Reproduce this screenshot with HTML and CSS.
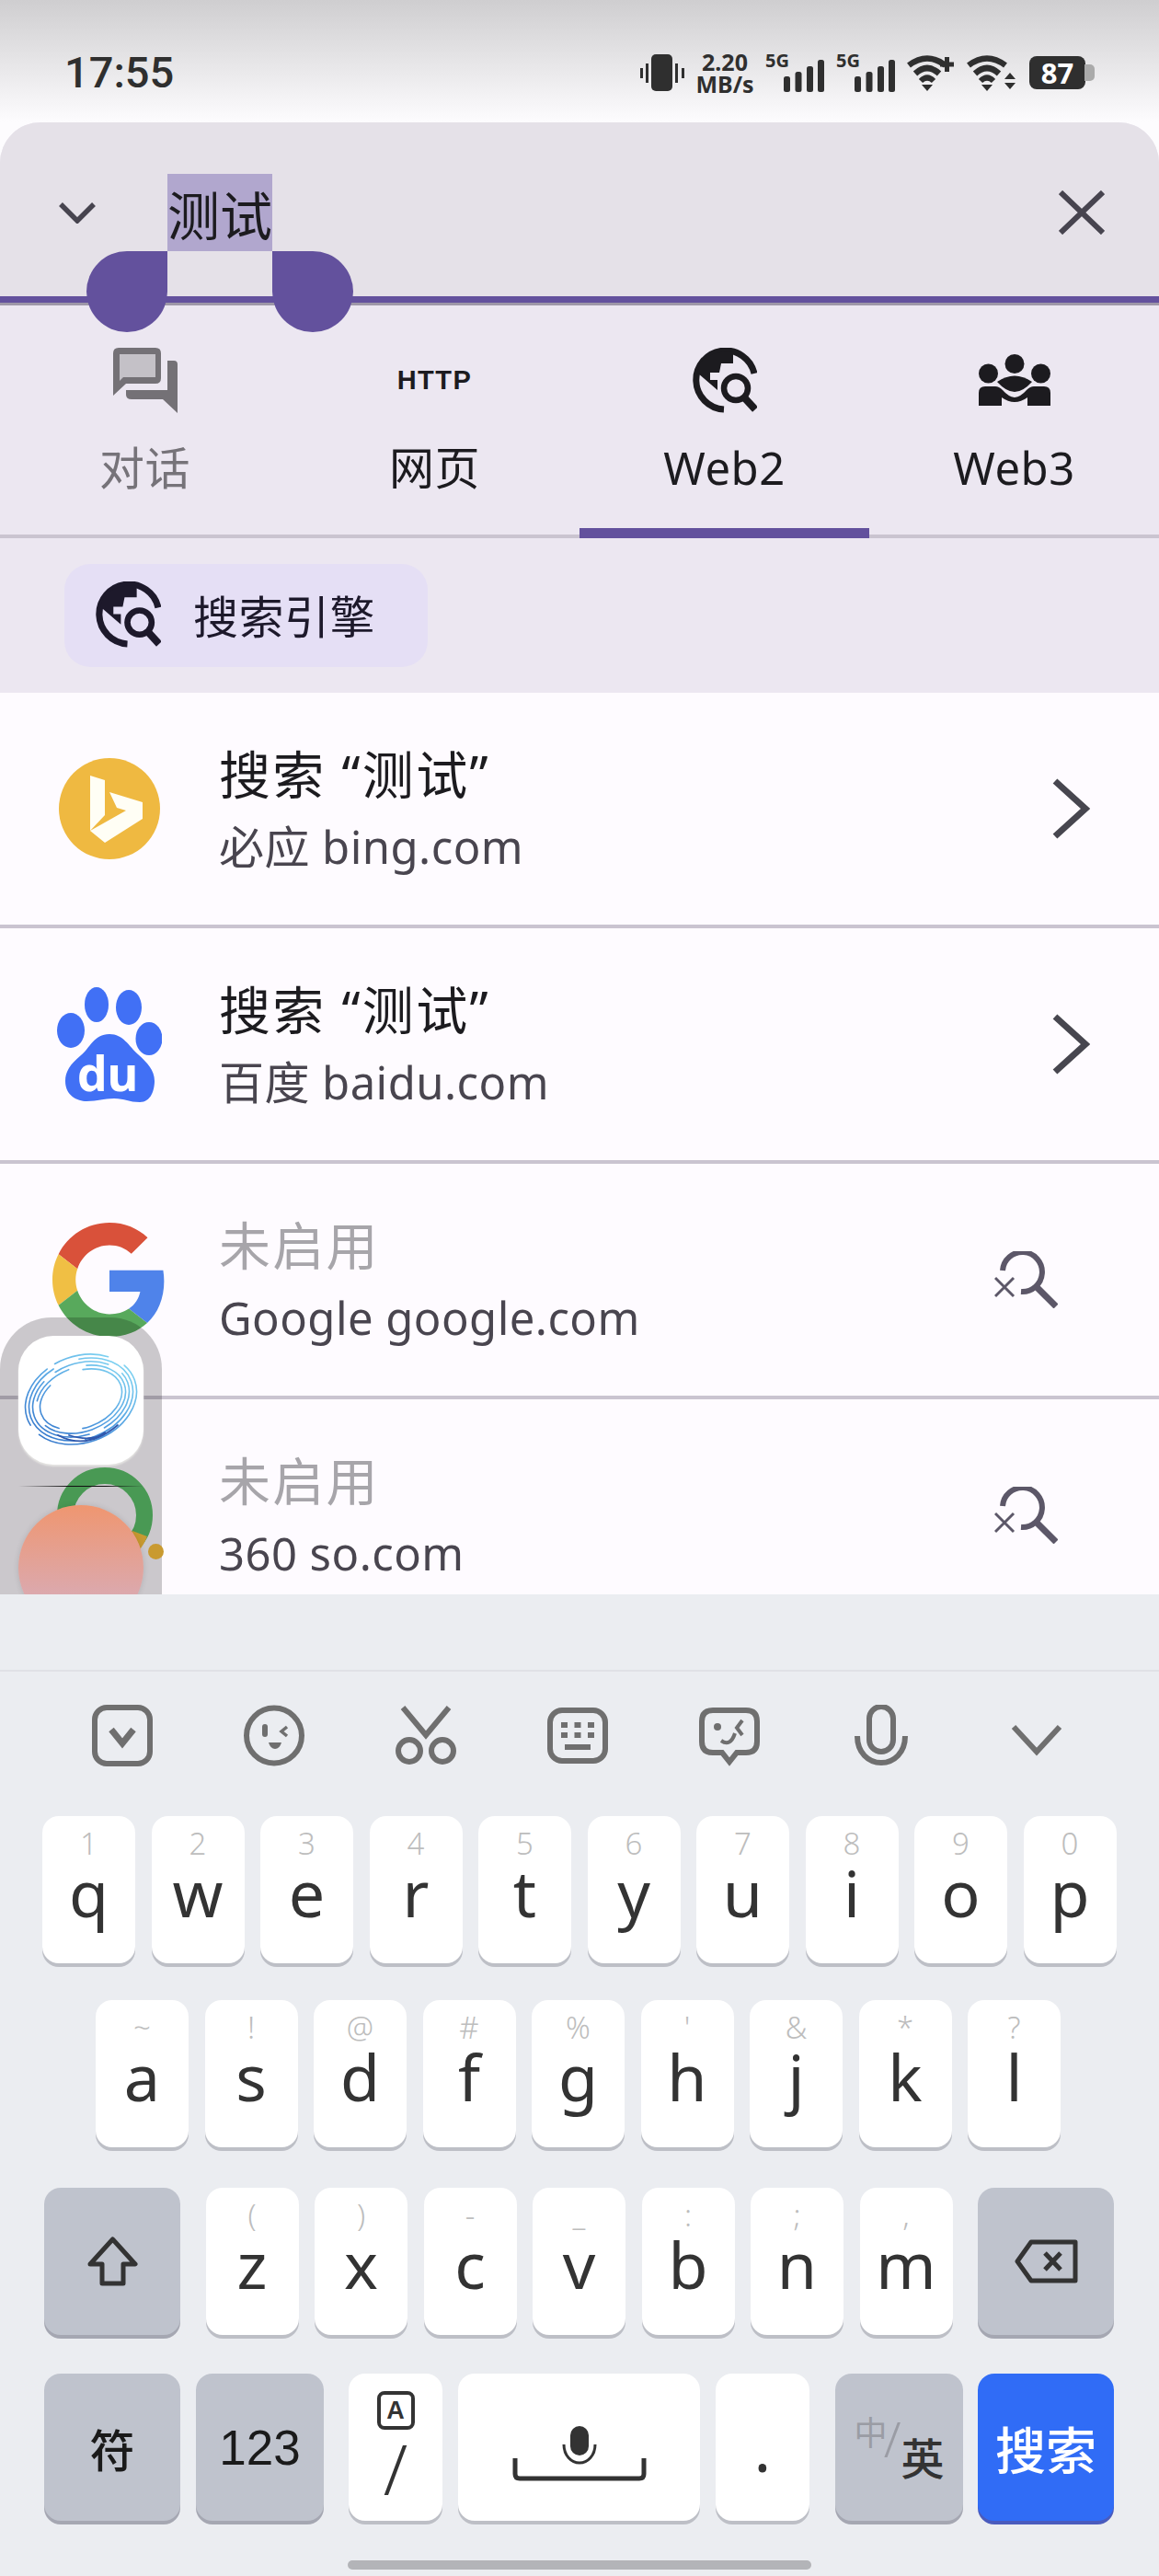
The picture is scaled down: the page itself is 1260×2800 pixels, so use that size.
FILE: index.html
```html
<!DOCTYPE html>
<html lang="zh">
<head>
    <meta charset="UTF-8">
    <title>搜索</title>
    <link rel="stylesheet" href="styles.css">
</head>
<body>
<svg class="defs" width="0" height="0">
    <symbol id="globe" viewBox="0 0 71 71">
        <path d="M68 28A32 32 0 1 0 35 67" fill="none" stroke="currentColor" stroke-width="7"/>
        <path d="M9 17C16 8 28 3 45 5V17H32L30 27H20V35H28V46L6 27Z" fill="currentColor"/>
        <circle cx="48" cy="44" r="13" fill="none" stroke="currentColor" stroke-width="6.5"/>
        <path d="M57 54L69 67" stroke="currentColor" stroke-width="8"/>
    </symbol>
    <symbol id="searchoff" viewBox="0 0 69 62">
        <path d="M9 21A21.5 21.5 0 1 1 29 44" fill="none" stroke="#5c5768" stroke-width="6"/>
        <path d="M46 39L67 60" stroke="#5c5768" stroke-width="7"/>
        <path d="M1 29L21 49M21 29L1 49" stroke="#5c5768" stroke-width="3"/>
    </symbol>
    <symbol id="bars" viewBox="0 0 64 44">
        <rect x="20" y="27" width="7" height="17" rx="2.5"/>
        <rect x="32.500" y="22" width="7" height="22" rx="2.5"/>
        <rect x="45" y="16" width="7" height="28" rx="2.5"/>
        <rect x="57" y="9" width="7" height="35" rx="2.5"/>
    </symbol>
    <symbol id="wifi" viewBox="0 0 44 40">
        <path d="M2 12Q22 -3 42 12" fill="none" stroke="#2f2f2f" stroke-width="6.500"/>
        <path d="M9 21Q22 9 35 21" fill="none" stroke="#2f2f2f" stroke-width="6.500"/>
        <path d="M15 29Q22 22 29 29" fill="none" stroke="#2f2f2f" stroke-width="6"/>
        <path d="M16 33H28L22 40Z" fill="#2f2f2f"/>
    </symbol>
</svg>

<div class="phone">
    <div class="status">
        <span class="time">17:55</span>
        <div class="status-icons">
            <svg width="48" height="40" viewBox="0 0 48 40" fill="#2f2f2f">
                <rect x="12" y="0" width="23" height="40" rx="5"/>
                <rect x="0" y="15" width="3" height="11"/>
                <rect x="6" y="10" width="3" height="21"/>
                <rect x="38" y="10" width="3" height="21"/>
                <rect x="45" y="15" width="3" height="11"/>
            </svg>
            <div class="speed"><span>2.20</span><span>MB/s</span></div>
            <svg class="bars" width="64" height="56" viewBox="0 0 64 56" fill="#2f2f2f">
                <use href="#bars" y="5" width="64" height="44"/>
                <text x="0" y="22" class="net">5G</text>
            </svg>
            <svg class="bars" width="64" height="56" viewBox="0 0 64 56" fill="#2f2f2f">
                <use href="#bars" y="5" width="64" height="44"/>
                <text x="0" y="22" class="net">5G</text>
            </svg>
            <svg width="52" height="40" viewBox="0 0 52 40">
                <use href="#wifi" width="44" height="40"/>
                <path d="M36 11H51M43.500 3V19" stroke="#2f2f2f" stroke-width="5"/>
            </svg>
            <svg width="55" height="40" viewBox="0 0 55 40">
                <use href="#wifi" width="44" height="40"/>
                <path d="M47 20L53 27H41ZM41 31H53L47 38Z" fill="#2f2f2f"/>
            </svg>
            <div class="battery">
                <div class="battery-body">87</div>
                <div class="battery-nub"></div>
            </div>
        </div>
    </div>

    <div class="sheet">
        <div class="search-bar">
            <svg class="search-back" width="40" height="23" viewBox="0 0 40 23">
                <path d="M2 2L20 20L38 2" fill="none" stroke="#47444f" stroke-width="5.500"/>
            </svg>
            <span class="search-text">测试</span>
            <svg class="search-close" width="50" height="48" viewBox="0 0 50 48">
                <path d="M2 2L48 46M48 2L2 46" stroke="#47444f" stroke-width="6"/>
            </svg>
            <div class="handle handle-left"></div>
            <div class="handle handle-right"></div>
        </div>

        <div class="tabs">
            <div class="tab tab-muted">
                <div class="tab-icon">
                    <svg width="70" height="71" viewBox="0 0 70 71">
                        <path d="M6 0H46Q52 0 52 6V33Q52 39 46 39H14L0 52V6Q0 0 6 0Z" fill="#747176"/>
                        <path d="M7 7H46V32H11L7 36Z" fill="#c4c1c7"/>
                        <path d="M59 14H66Q70 14 70 18V71L54 56H20Q14 56 14 51V46H59Z" fill="#747176"/>
                    </svg>
                </div>
                <span>对话</span>
            </div>
            <div class="tab">
                <div class="tab-icon"><span class="http">HTTP</span></div>
                <span>网页</span>
            </div>
            <div class="tab tab-on">
                <div class="tab-icon"><svg class="ink" width="71" height="71"><use href="#globe"/></svg></div>
                <span>Web2</span>
            </div>
            <div class="tab">
                <div class="tab-icon">
                    <svg width="78" height="56" viewBox="0 0 78 56" fill="#1c1b1f">
                        <circle cx="39" cy="10.500" r="10.500"/>
                        <circle cx="10.500" cy="21" r="10.500"/>
                        <circle cx="67.500" cy="21" r="10.500"/>
                        <path d="M20 30Q39 17 58 30Q48 41 39 41Q30 41 20 30Z"/>
                        <path d="M0 56V42Q0 35 7 35H18Q22 35 26 39Q32 46 39 47Q46 46 52 39Q56 35 60 35H71Q78 35 78 42V56H53V47Q46 52 39 52Q32 52 25 47V56Z"/>
                    </svg>
                </div>
                <span>Web3</span>
            </div>
        </div>

        <div class="filters">
            <div class="chip">
                <svg class="chip-icon" width="72" height="72"><use href="#globe"/></svg>
                <span>搜索引擎</span>
            </div>
        </div>

        <div class="list">
            <div class="row">
                <div class="logo">
                    <svg width="110" height="110" viewBox="0 0 110 110">
                        <circle cx="55" cy="55" r="55" fill="#efb941"/>
                        <path d="M34 19L50 24V62L34 79Z" fill="#fffef5"/>
                        <path d="M34 79L73 57L63 54L55 37L91 48V66L50 92Z" fill="#fffef5"/>
                    </svg>
                </div>
                <div class="row-text">
                    <div class="row-title">搜索 “测试”</div>
                    <div class="row-sub">必应 bing.com</div>
                </div>
                <svg class="row-arrow" width="42" height="68" viewBox="0 0 42 68">
                    <path d="M4 4L37 34L4 64" fill="none" stroke="#47464f" stroke-width="7"/>
                </svg>
            </div>
            <div class="row">
                <div class="logo">
                    <svg width="114" height="135" viewBox="0 -5 114 135" fill="#4170f5">
                        <ellipse cx="43" cy="19" rx="13" ry="19"/>
                        <ellipse cx="78" cy="22" rx="14" ry="19"/>
                        <ellipse cx="15" cy="47" rx="15" ry="19"/>
                        <ellipse cx="100" cy="56" rx="14.500" ry="18"/>
                        <path d="M57 51C40 51 36 66 26 74C14 84 9 92 9 102C9 118 22 124 32 124C45 124 50 121 62 121C74 121 78 125 90 125C102 125 106 112 106 102C106 90 98 82 88 73C78 64 72 51 57 51Z"/>
                        <text x="55" y="113" class="du" text-anchor="middle">du</text>
                    </svg>
                </div>
                <div class="row-text">
                    <div class="row-title">搜索 “测试”</div>
                    <div class="row-sub">百度 baidu.com</div>
                </div>
                <svg class="row-arrow" width="42" height="68" viewBox="0 0 42 68">
                    <path d="M4 4L37 34L4 64" fill="none" stroke="#47464f" stroke-width="7"/>
                </svg>
            </div>
            <div class="row">
                <div class="logo">
                    <svg width="124" height="124" viewBox="0 0 48 48">
                        <path fill="#d9513a" d="M24 9.500c3.540 0 6.710 1.220 9.210 3.600l6.850-6.850C35.900 2.380 30.470 0 24 0 14.620 0 6.510 5.380 2.560 13.220l7.980 6.190C12.430 13.720 17.740 9.500 24 9.500z"/>
                        <path fill="#4f83ea" d="M46.980 24.550c0-1.570-.15-3.090-.38-4.550H24v9.020h12.940c-.58 2.960-2.260 5.480-4.780 7.180l7.730 6c4.510-4.180 7.090-10.360 7.090-17.650z"/>
                        <path fill="#f0bf44" d="M10.530 28.590c-.48-1.450-.76-2.990-.76-4.590s.27-3.140.76-4.590l-7.980-6.190C.92 16.460 0 20.120 0 24c0 3.880.92 7.540 2.560 10.780l7.970-6.190z"/>
                        <path fill="#58a95c" d="M24 48c6.480 0 11.930-2.130 15.890-5.810l-7.730-6c-2.150 1.450-4.920 2.300-8.160 2.300-6.260 0-11.570-4.220-13.470-9.910l-7.980 6.190C6.510 42.620 14.620 48 24 48z"/>
                    </svg>
                </div>
                <div class="row-text">
                    <div class="row-title row-off">未启用</div>
                    <div class="row-sub">Google google.com</div>
                </div>
                <svg class="row-find" width="69" height="62"><use href="#searchoff"/></svg>
            </div>
            <div class="row">
                <div class="logo">
                    <svg width="124" height="124" viewBox="0 0 124 124">
                        <circle cx="57" cy="62" r="43" fill="none" stroke="#5cc06a" stroke-width="18"/>
                        <path d="M95 82Q92 90 86 97" fill="none" stroke="#fac03c" stroke-width="17"/>
                    </svg>
                </div>
                <div class="row-text">
                    <div class="row-title row-off">未启用</div>
                    <div class="row-sub">360 so.com</div>
                </div>
                <svg class="row-find" width="69" height="62"><use href="#searchoff"/></svg>
            </div>
        </div>
    </div>

    <div class="keyboard">
        <div class="tools">
            <svg width="66" height="67" viewBox="0 0 66 67" class="tool">
                <rect x="3" y="3" width="60" height="61" rx="13"/>
                <path d="M21 27L33 42L45 27" stroke-width="7"/>
            </svg>
            <svg width="66" height="67" viewBox="0 0 66 67" class="tool">
                <circle cx="33" cy="33.500" r="30"/>
                <path d="M23 24V32" stroke-width="6" stroke-linecap="round"/>
                <path d="M47 24L41 29L47 34" stroke-width="3.500"/>
                <path d="M27 41H41Q39 48 34 48Q29 48 27 41Z" class="solid"/>
            </svg>
            <svg width="66" height="67" viewBox="0 0 66 67" class="tool">
                <path d="M8 3L33 33L58 3"/>
                <circle cx="15" cy="50" r="12"/>
                <circle cx="51" cy="50" r="12"/>
            </svg>
            <svg width="66" height="67" viewBox="0 0 66 67" class="tool">
                <rect x="3" y="6" width="60" height="55" rx="13"/>
                <path d="M15 19h7v6h-7zM29.500 19h7v6h-7zM44 19h7v6h-7zM15 30h7v6h-7zM29.500 30h7v6h-7zM44 30h7v6h-7zM19 43h28v6H19z" class="solid"/>
            </svg>
            <svg width="66" height="67" viewBox="0 0 66 67" class="tool">
                <path d="M15 6H51Q63 6 63 18V40Q63 52 51 52H41L33 62L25 52H15Q3 52 3 40V18Q3 6 15 6Z"/>
                <circle cx="20" cy="24" r="4" class="solid"/>
                <path d="M47 17L41 25L47 33" stroke-width="4"/>
                <path d="M24 39Q34 46 39 31" stroke-width="4"/>
            </svg>
            <svg width="66" height="67" viewBox="0 0 66 67" class="tool">
                <rect x="20" y="2" width="26" height="49" rx="13"/>
                <path d="M7 34C7 52 19 63 33 63C47 63 59 52 59 34"/>
            </svg>
            <svg width="66" height="67" viewBox="0 0 66 67" class="tool">
                <path d="M12 24L37 51L62 24"/>
            </svg>
        </div>

        <div class="keys keys-top">
            <div class="key"><span class="hint">1</span><span class="letter">q</span></div>
            <div class="key"><span class="hint">2</span><span class="letter">w</span></div>
            <div class="key"><span class="hint">3</span><span class="letter">e</span></div>
            <div class="key"><span class="hint">4</span><span class="letter">r</span></div>
            <div class="key"><span class="hint">5</span><span class="letter">t</span></div>
            <div class="key"><span class="hint">6</span><span class="letter">y</span></div>
            <div class="key"><span class="hint">7</span><span class="letter">u</span></div>
            <div class="key"><span class="hint">8</span><span class="letter">i</span></div>
            <div class="key"><span class="hint">9</span><span class="letter">o</span></div>
            <div class="key"><span class="hint">0</span><span class="letter">p</span></div>
        </div>
        <div class="keys keys-home">
            <div class="key"><span class="hint">~</span><span class="letter">a</span></div>
            <div class="key"><span class="hint">!</span><span class="letter">s</span></div>
            <div class="key"><span class="hint">@</span><span class="letter">d</span></div>
            <div class="key"><span class="hint">#</span><span class="letter">f</span></div>
            <div class="key"><span class="hint">%</span><span class="letter">g</span></div>
            <div class="key"><span class="hint">'</span><span class="letter">h</span></div>
            <div class="key"><span class="hint">&amp;</span><span class="letter">j</span></div>
            <div class="key"><span class="hint">*</span><span class="letter">k</span></div>
            <div class="key"><span class="hint">?</span><span class="letter">l</span></div>
        </div>
        <div class="keys keys-shift">
            <div class="key key-gray key-side">
                <svg width="55" height="54" viewBox="0 0 55 54">
                    <path d="M27.500 3L52 30H39V51H16V30H3Z" fill="none" stroke="#333" stroke-width="5" stroke-linejoin="round"/>
                </svg>
            </div>
            <div class="key key-first"><span class="hint">(</span><span class="letter">z</span></div>
            <div class="key"><span class="hint">)</span><span class="letter">x</span></div>
            <div class="key"><span class="hint">-</span><span class="letter">c</span></div>
            <div class="key"><span class="hint">_</span><span class="letter">v</span></div>
            <div class="key"><span class="hint">:</span><span class="letter">b</span></div>
            <div class="key"><span class="hint">;</span><span class="letter">n</span></div>
            <div class="key"><span class="hint">,</span><span class="letter">m</span></div>
            <div class="key key-gray key-side key-last">
                <svg width="69" height="48" viewBox="0 0 69 48">
                    <path d="M18 3H66V45H18L3 24Z" fill="none" stroke="#333" stroke-width="5" stroke-linejoin="round"/>
                    <path d="M33 15L50 33M50 15L33 33" stroke="#333" stroke-width="5"/>
                </svg>
            </div>
        </div>
        <div class="keys keys-bottom">
            <div class="key key-gray key-side key-text">符</div>
            <div class="key key-gray key-num key-text key-digits">123</div>
            <div class="key key-slash">
                <span class="a-box">A</span>
                <span class="slash">/</span>
            </div>
            <div class="key key-space">
                <svg width="146" height="60" viewBox="0 0 146 60">
                    <rect x="63" y="0" width="20" height="32" rx="10" fill="#333"/>
                    <path d="M56 20C56 32 64 40 73 40C82 40 90 32 90 20" fill="none" stroke="#333" stroke-width="3"/>
                    <path d="M3 35V52Q3 57 8 57H138Q143 57 143 52V35" fill="none" stroke="#333" stroke-width="5"/>
                </svg>
            </div>
            <div class="key key-dot">.</div>
            <div class="key key-gray key-num key-lang">
                <span class="lang-zh">中</span>
                <span class="lang-bar">/</span>
                <span class="lang-en">英</span>
            </div>
            <div class="key key-blue key-side">搜索</div>
        </div>
        <div class="home-bar"></div>
    </div>

    <div class="dock">
        <div class="dock-line"></div>
        <div class="dock-app">
            <svg width="136" height="140" viewBox="0 0 136 140" fill="none" stroke-linecap="round">
                <defs>
                    <linearGradient id="swirl" x1="10" y1="120" x2="125" y2="30" gradientUnits="userSpaceOnUse">
                        <stop offset="0" stop-color="#2c6cc4"/>
                        <stop offset=".45" stop-color="#4f9be0"/>
                        <stop offset="1" stop-color="#86dcf4"/>
                    </linearGradient>
                </defs>
                <g stroke="url(#swirl)" stroke-width="1.600" transform="rotate(-20 68 69)">
                    <ellipse cx="68" cy="69" rx="62" ry="47" stroke-dasharray="150 14 70 10 60 20"/>
                    <ellipse cx="68" cy="69" rx="58" ry="43" stroke-dasharray="90 12 120 30"/>
                    <ellipse cx="68" cy="69" rx="54" ry="39" stroke-dasharray="60 18 110 16"/>
                    <ellipse cx="68" cy="69" rx="50" ry="35" stroke-dasharray="120 30 50 20"/>
                    <ellipse cx="68" cy="69" rx="46" ry="31" stroke-dasharray="70 26 60 40"/>
                </g>
                <path d="M43 108Q75 125 108 97M55 108Q80 116 94 105" stroke="#2f58ad" stroke-width="1.800"/>
            </svg>
        </div>
        <div class="dock-ball"></div>
    </div>
    <div class="dock-dot"></div>
</div>
</body>
</html>
```

FILE: styles.css
```css
* {
    margin: 0;
    padding: 0;
    box-sizing: border-box;
}

body {
    background: #fdfcfe;
    font-family: "Noto Sans", "Noto Sans CJK SC", sans-serif;
}

.defs {
    display: block;
    height: 0;
}

.phone {
    position: relative;
    width: 1260px;
    height: 2800px;
    overflow: hidden;
}

/* status bar */
.status {
    display: flex;
    justify-content: space-between;
    align-items: center;
    height: 133px;
    padding: 24px 70px 0;
    background: linear-gradient(#cfced0, #fdfcfe);
}

.time {
    font-family: Roboto, sans-serif;
    font-size: 47px;
    font-weight: 500;
    color: #2f2f2f;
}

.status-icons {
    display: flex;
    align-items: center;
    gap: 13px;
}

.speed {
    display: flex;
    flex-direction: column;
    align-items: center;
    width: 62px;
    font-size: 25px;
    font-weight: 700;
    line-height: 24px;
    color: #2f2f2f;
}

.net {
    font-family: "Noto Sans", sans-serif;
    font-size: 20px;
    font-weight: 700;
}

.battery {
    display: flex;
    align-items: center;
}

.battery-body {
    width: 61px;
    height: 36px;
    border-radius: 8px;
    background: #2f2f2f;
    color: #fff;
    font-size: 31px;
    font-weight: 700;
    line-height: 36px;
    text-align: center;
}

.battery-nub {
    width: 11px;
    height: 18px;
    margin-left: -1px;
    border-radius: 0 5px 5px 0;
    background: #aaa;
}

/* search sheet */
.sheet {
    border-radius: 44px 44px 0 0;
    overflow: hidden;
    background: #ece7f1;
}

.search-bar {
    position: relative;
    display: flex;
    align-items: center;
    height: 199px;
    padding: 56px 59px 49px 64px;
    background: #e5e1e8;
    border-bottom: 10px solid #63519d;
}

.search-bar::after {
    content: "";
    position: absolute;
    left: 0;
    right: 0;
    bottom: -10px;
    height: 3px;
    background: #9e97a8;
}

.search-back {
    margin-right: 78px;
}

.search-text {
    height: 84px;
    background: #b1a7ce;
    font-family: "Noto Sans CJK SC", sans-serif;
    font-size: 57px;
    line-height: 84px;
    color: #1c1b1f;
}

.search-close {
    margin-left: auto;
}

.handle {
    position: absolute;
    top: 140px;
    width: 88px;
    height: 88px;
    background: #63519d;
    z-index: 2;
}

.handle-left {
    left: 94px;
    border-radius: 44px 0 44px 44px;
}

.handle-right {
    left: 296px;
    border-radius: 0 44px 44px 44px;
}

/* tabs */
.tabs {
    display: flex;
    height: 253px;
    border-bottom: 4px solid #cac4d0;
}

.tab {
    display: flex;
    flex-direction: column;
    align-items: center;
    width: 315px;
    height: 253px;
    padding-top: 40px;
    font-size: 49px;
    letter-spacing: .5px;
    line-height: 70px;
    color: #1c1b1f;
}

.tab-muted {
    color: #767379;
}

.tab-on {
    border-bottom: 11px solid #63519d;
}

.tab-icon {
    display: flex;
    justify-content: center;
    align-items: center;
    height: 82px;
    margin-bottom: 19px;
}

.http {
    font-family: "Liberation Sans", sans-serif;
    font-size: 29px;
    font-weight: 700;
    letter-spacing: 1.500px;
}

.ink {
    color: #1c1b1f;
}

.filters {
    padding: 28px 70px;
}

.chip {
    display: flex;
    align-items: center;
    gap: 35px;
    width: 395px;
    height: 112px;
    padding: 0 0 3px 33px;
    border-radius: 28px;
    background: #e5dff5;
    font-size: 49px;
    letter-spacing: .5px;
    color: #1d192b;
}

.chip-icon {
    color: #1d192b;
}

/* result list */
.list {
    height: 980px;
    overflow: hidden;
    background: #fefbff;
}

.row {
    display: flex;
    align-items: center;
    height: 256px;
    border-bottom: 4px solid #cac4d0;
}

.logo {
    display: flex;
    justify-content: center;
    flex: none;
    width: 238px;
}

.row-text {
    flex: 1;
}

.row-title {
    font-size: 56px;
    line-height: 82px;
    letter-spacing: 2.300px;
    color: #1c1b1f;
}

.row-off {
    color: #a7a5aa;
}

.row-sub {
    font-size: 49px;
    line-height: 76px;
    letter-spacing: .45px;
    color: #49454f;
}

.row-arrow {
    margin-right: 75px;
}

.row-find {
    margin-right: 110px;
}

/* keyboard */
.keyboard {
    height: 1067px;
    padding-top: 82px;
    background: #ebedf1;
}

.tools {
    display: grid;
    grid-template-columns: repeat(7, 165px);
    justify-items: center;
    height: 159px;
    padding: 36px 0 0 50px;
    border-top: 2px solid #e0e1e6;
}

.tool {
    fill: none;
    stroke: #6f6f6f;
    stroke-width: 6;
}

.tool .solid {
    fill: #6f6f6f;
    stroke: none;
}

.keys {
    display: flex;
    gap: 17.500px;
    height: 160px;
}

.keys-top {
    padding-left: 46px;
    margin-bottom: 40px;
}

.keys-home {
    padding-left: 104px;
    margin-bottom: 44px;
}

.keys-shift {
    padding-left: 48px;
    margin-bottom: 42px;
}

.keys-bottom {
    padding-left: 48px;
    gap: 17px;
}

.key {
    display: flex;
    flex-direction: column;
    align-items: center;
    flex: none;
    width: 101px;
    height: 160px;
    padding-top: 13px;
    border-radius: 18px;
    background: #fff;
    box-shadow: 0 4px 0 #bdbfc6;
    color: #333;
}

.hint {
    font-size: 33px;
    font-weight: 300;
    line-height: 34px;
    color: #bdbdbd;
}

.letter {
    font-size: 70px;
    line-height: 72px;
}

.key-gray {
    background: #bfc3cd;
    box-shadow: 0 4px 0 #a5a7b2;
}

.key-side {
    justify-content: center;
    width: 148px;
    padding-top: 0;
}

.key-first {
    margin-left: 10px;
}

.key-last {
    margin-left: 10px;
}

.key-text {
    justify-content: center;
    padding-top: 0;
    font-size: 49px;
    font-weight: 500;
    color: #1a1a1a;
}

.key-digits {
    font-family: "Liberation Sans", sans-serif;
    font-size: 53px;
    font-weight: 400;
}

.key-num {
    width: 139px;
}

.key-slash {
    width: 102px;
    margin-left: 10px;
    padding-top: 19px;
}

.a-box {
    width: 41px;
    height: 42px;
    border: 4px solid #333;
    border-radius: 8px;
    font-family: "Liberation Sans", sans-serif;
    font-size: 27px;
    font-weight: 700;
    line-height: 34px;
    text-align: center;
}

.slash {
    font-size: 76px;
    line-height: 84px;
    font-weight: 300;
}

.key-space {
    justify-content: center;
    width: 263px;
    padding-top: 14px;
}

.key-dot {
    width: 102px;
    padding-top: 40px;
    font-size: 70px;
    line-height: 80px;
}

.key-lang {
    flex-direction: row;
    align-items: flex-start;
    justify-content: center;
    margin-left: 11px;
    padding-top: 40px;
    font-family: "Noto Sans CJK SC", sans-serif;
}

.lang-zh {
    font-size: 36px;
    line-height: 44px;
    color: #9a9ca4;
}

.lang-bar {
    font-family: "Noto Sans", sans-serif;
    font-size: 54px;
    font-weight: 300;
    line-height: 60px;
    color: #9a9ca4;
    margin: 0 0 0 -4px;
}

.lang-en {
    margin-top: 22px;
    font-size: 47px;
    font-weight: 500;
    line-height: 56px;
    color: #333;
}

.key-blue {
    margin-left: -1px;
    background: #306cf6;
    box-shadow: 0 4px 0 #4a5bbd;
    font-family: "Noto Sans CJK SC", sans-serif;
    font-size: 55px;
    font-weight: 500;
    color: #fff;
}

.home-bar {
    width: 504px;
    height: 10px;
    margin: 43px auto 0;
    border-radius: 5px;
    background: #b3b4b8;
}

/* floating dock lying over the list */
.dock {
    position: absolute;
    left: 0;
    top: 1432px;
    width: 176px;
    height: 301px;
    overflow: hidden;
    border-radius: 56px 56px 0 0;
    background: rgba(0, 0, 0, .2);
}

.dock-line {
    position: absolute;
    left: 20px;
    top: 183px;
    width: 136px;
    height: 1px;
    background: linear-gradient(90deg, rgba(0, 0, 0, 0), #111 40%, #111 70%, rgba(0, 0, 0, 0));
}

.dock-app {
    position: absolute;
    left: 20px;
    top: 20px;
    width: 136px;
    height: 140px;
    border-radius: 38px;
    background: #fff;
    box-shadow: 0 2px 2px #e6e5e3;
}

.dock-ball {
    position: absolute;
    left: 20px;
    top: 204px;
    width: 136px;
    height: 136px;
    border-radius: 50%;
    background: linear-gradient(#ef9670, #d4b0c6);
    box-shadow: 0 0 6px rgba(0, 0, 0, .12);
}

.dock-dot {
    position: absolute;
    left: 161px;
    top: 1678px;
    width: 17px;
    height: 17px;
    border-radius: 50%;
    background: #c99a30;
}

.du {
    font-family: "Noto Sans", sans-serif;
    font-size: 52px;
    font-weight: 700;
    fill: #fff;
}
```
